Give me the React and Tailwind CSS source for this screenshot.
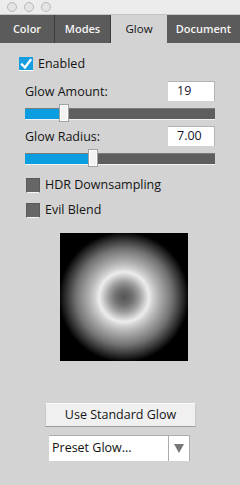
import React from 'react';

function Slider({ value }) {
  // value is the thumb's left offset in px
  return (
    <div className="relative mx-[25px] h-[12px]">
      <div className="h-[11px] bg-[#5e5e5e] border-t border-[#7a7a7a] flex">
        <div className="h-full bg-[#0a9ee0]" style={{ width: value }} />
      </div>
      <div className="h-[1px] bg-[#f2f2f2]" />
      <div
        className="absolute top-[-4px] w-[10px] h-[18px] bg-[#f3f3f3] border border-[#a0a0a0] shadow-[inset_0_0_0_1px_#ffffff]"
        style={{ left: value - 1 }}
      />
    </div>
  );
}

function ValueRow({ label, value }) {
  return (
    <div className="flex items-center justify-between pl-[25px] pr-[25px] h-[20px]">
      <span className="text-[12.5px] text-[#151515] pt-[3px]">{label}</span>
      <div className="w-[47px] h-[20px] bg-white border-t border-r border-[#b3b3b3] flex items-center pl-[9px] text-[12.5px] text-[#15152a]">
        {value}
      </div>
    </div>
  );
}

function GrayCheck({ label }) {
  return (
    <div className="flex items-center pl-[26px] h-[15px]">
      <div className="w-[14px] h-[15px] bg-[#666666] border border-[#5a5a5a] border-b-[#f5f5f5]" />
      <span className="ml-[5px] text-[12.5px] text-[#151515]">{label}</span>
    </div>
  );
}

export default function App() {
  return (
    <div className="w-[240px] h-[485px] bg-[#d3d3d3] overflow-hidden font-['Open_Sans',sans-serif] select-none">
      {/* Title bar */}
      <div className="h-[15px] bg-[#ececec] border-b border-[#c4c4c4] flex items-center pl-[7px] gap-[7px]">
        <div className="w-[10px] h-[10px] rounded-full border border-[#b9b9b9] bg-[#e4e4e4]" />
        <div className="w-[10px] h-[10px] rounded-full border border-[#b9b9b9] bg-[#e4e4e4]" />
        <div className="w-[10px] h-[10px] rounded-full border border-[#b9b9b9] bg-[#e4e4e4]" />
      </div>

      {/* Tabs */}
      <div className="flex h-[28px]">
        <div className="w-[55px] bg-[#5b5b5b] border-r border-[#3e3e3e] flex items-center justify-center text-[11px] font-semibold text-[#f4f4f4]">
          Color
        </div>
        <div className="w-[56px] bg-[#5b5b5b] border-r border-[#3e3e3e] flex items-center justify-center text-[11px] font-semibold text-[#f4f4f4]">
          Modes
        </div>
        <div className="w-[56px] bg-[#d3d3d3] flex items-center justify-center text-[11.5px] text-[#111]">
          Glow
        </div>
        <div className="flex-1 bg-[#5b5b5b] flex items-center justify-center text-[11px] font-semibold text-[#f4f4f4]">
          Document
        </div>
      </div>

      {/* Enabled */}
      <div className="mt-[14px] flex items-center pl-[19px] h-[14px]">
        <div className="w-[14px] h-[14px] bg-[#169ddf] border-b border-white flex items-center justify-center">
          <svg width="12" height="12" viewBox="0 0 12 12">
            <path d="M2 6.5 L5 9.5 L10.5 2" fill="none" stroke="#ffffff" strokeWidth="2.3" strokeLinecap="square" />
          </svg>
        </div>
        <span className="ml-[5px] text-[12.5px] text-[#151515]">Enabled</span>
      </div>

      <div className="mt-[10px]">
        <ValueRow label="Glow Amount:" value="19" />
      </div>
      <div className="mt-[7px]">
        <Slider value={35} />
      </div>

      <div className="mt-[6px]">
        <ValueRow label="Glow Radius:" value="7.00" />
      </div>
      <div className="mt-[7px]">
        <Slider value={64} />
      </div>

      <div className="mt-[13px]">
        <GrayCheck label="HDR Downsampling" />
      </div>
      <div className="mt-[10px]">
        <GrayCheck label="Evil Blend" />
      </div>

      {/* Glow preview */}
      <div className="mt-[15px] ml-[60px] w-[128px] h-[128px] bg-black bg-[radial-gradient(circle_at_center,#555555_0px,#6e6e6e_8px,#9a9a9a_15px,#d6d6d6_22px,#ececec_25px,#d0d0d0_29px,#b0b0b0_35px,#727272_48px,#303030_58px,#000000_65px)]" />

      {/* Button */}
      <div className="mt-[42px] ml-[45px] w-[151px] h-[24px] bg-[#f0f0f0] border-t border-[#fafafa] border-b border-b-[#9c9c9c] border-x border-x-[#c8c8c8] flex items-center justify-center text-[12.5px] text-[#151515]">
        Use Standard Glow
      </div>

      {/* Preset select */}
      <div className="mt-[8px] ml-[49px] w-[141px] h-[26px] bg-white border-t border-r border-[#acacac] flex">
        <div className="flex-1 flex items-center pl-[3px] text-[12.5px] text-[#111]">Preset Glow...</div>
        <div className="w-[21px] border-l border-[#acacac] flex items-center justify-center">
          <svg width="10" height="9" viewBox="0 0 10 9">
            <path d="M0 0 L10 0 L5 9 Z" fill="#777777" />
          </svg>
        </div>
      </div>
    </div>
  );
}
